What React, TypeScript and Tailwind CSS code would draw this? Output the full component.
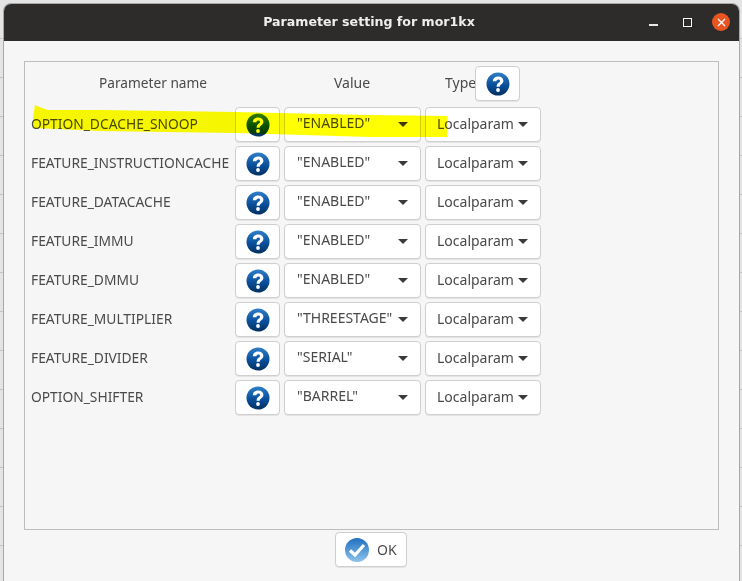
const rows = [
  { name: 'OPTION_DCACHE_SNOOP', value: '"ENABLED"', active: true },
  { name: 'FEATURE_INSTRUCTIONCACHE', value: '"ENABLED"' },
  { name: 'FEATURE_DATACACHE', value: '"ENABLED"' },
  { name: 'FEATURE_IMMU', value: '"ENABLED"' },
  { name: 'FEATURE_DMMU', value: '"ENABLED"' },
  { name: 'FEATURE_MULTIPLIER', value: '"THREESTAGE"' },
  { name: 'FEATURE_DIVIDER', value: '"SERIAL"' },
  { name: 'OPTION_SHIFTER', value: '"BARREL"' },
]

function HelpIcon({ id }: { id: string }) {
  return (
    <svg width="24" height="24" viewBox="0 0 24 24">
      <defs>
        <linearGradient id={id} x1="0" y1="0" x2="0" y2="1">
          <stop offset="0" stopColor="#2f7fc8" />
          <stop offset="0.55" stopColor="#0a4f9c" />
          <stop offset="1" stopColor="#03305f" />
        </linearGradient>
      </defs>
      <circle cx="12" cy="12" r="11.5" fill={`url(#${id})`} />
      <path d="M6.800 9.300C6.900 6.200 9.200 4.500 12.200 4.500c3.100 0 5.200 1.700 5.200 4.300 0 2-1.100 2.900-2.300 3.800-1 .7-1.300 1.200-1.300 2.200h-3.200c0-2 .6-3 1.900-4 .9-.7 1.500-1.100 1.500-1.900 0-.9-.7-1.400-1.700-1.400-1.100 0-1.800.7-1.900 1.800z" fill="#fff" />
      <circle cx="12" cy="18" r="1.900" fill="#fff" />
    </svg>
  )
}

function Caret() {
  return <span className="h-0 w-0 border-x-[5px] border-t-[5px] border-x-transparent border-t-[#3a3a3a]" />
}

function Btn({ className, children }: { className: string; children: React.ReactNode }) {
  return (
    <div className={`flex h-[35px] items-center rounded-[4px] border border-[#cfcfcf] bg-white shadow-[0_1px_0_#e4e4e4] ${className}`}>
      {children}
    </div>
  )
}

export default function App() {
  return (
    <div className="relative h-[581px] w-[742px] overflow-hidden bg-[repeating-linear-gradient(180deg,#e4e4e4_0,#e4e4e4_38px,#c4c4c4_38px,#c4c4c4_39px)] pl-1 pr-[3px] pt-1 font-['Noto_Sans',sans-serif] text-[14px] text-[#4a4a4a]">
      <div className="flex h-[577px] flex-col rounded-t-[7px] bg-[#f6f6f6] shadow-[0_0_0_1px_#a8a8a8]">
        {/* title bar */}
        <div className="relative flex h-[37px] items-center justify-center rounded-t-[7px] bg-[#2e2c2b] pr-[5px]">
          <span className="font-['DejaVu_Sans',sans-serif] text-[12.6px] font-bold text-[#eeeeee]">Parameter setting for mor1kx</span>
          <div className="absolute right-[9px] top-[9px] flex items-center">
            <span className="mr-[25px] mt-[5px] h-[2px] w-[9px] bg-[#e8e8e8]" />
            <span className="mr-[20px] h-[9px] w-[9px] border border-white" />
            <span className="flex h-[18px] w-[18px] items-center justify-center rounded-full bg-[#e95420]">
              <svg width="9" height="9" viewBox="0 0 9 9"><path d="M1 1l7 7M8 1L1 8" stroke="#fff" strokeWidth="1.400" /></svg>
            </span>
          </div>
        </div>

        <div className="flex flex-1 flex-col px-5 pt-5">
          {/* panel */}
          <div className="h-[469px] w-[695px] border border-[#bdbdbd] pl-[6px] pt-1">
            <div className="flex h-[35px] items-center">
              <span className="w-[204px] pl-[68px] text-[13.7px]">Parameter name</span>
              <span className="ml-[49px] w-[111px] pb-[2px] pl-[50px]">Value</span>
              <span className="w-[80px] pb-[2px] pl-[50px]">Type</span>
              <Btn className="w-[45px] justify-center">
                <HelpIcon id="help-head" />
              </Btn>
            </div>
            <div className="mt-[6px] flex flex-col gap-1">
              {rows.map((r, i) => (
                <div key={r.name} className="flex items-center">
                  <span className="w-[204px] whitespace-nowrap text-[13.8px]">{r.name}</span>
                  <Btn className="w-[45px] justify-center">
                    <HelpIcon id={`help-${i}`} />
                  </Btn>
                  <Btn className="ml-1 w-[137px] justify-between pl-3 pr-3">
                    <span className="mt-[-4px] whitespace-nowrap">{r.value}</span>
                    <Caret />
                  </Btn>
                  <Btn className="ml-1 w-[116px] justify-between pl-[11px] pr-3">
                    <span className="mt-[-3px]">Localparam</span>
                    <Caret />
                  </Btn>
                </div>
              ))}
            </div>
          </div>

          {/* ok */}
          <div className="mt-[2px] flex justify-center">
            <Btn className="mr-[1px] w-[72px] gap-2 pl-[9px]">
              <svg width="24" height="24" viewBox="0 0 24 24">
                <defs>
                  <linearGradient id="ok-fill" x1="0" y1="0" x2="0" y2="1">
                    <stop offset="0" stopColor="#1f6fc0" />
                    <stop offset="1" stopColor="#8fc4ea" />
                  </linearGradient>
                </defs>
                <circle cx="12" cy="12" r="12" fill="url(#ok-fill)" />
                <path d="M5 12.500l5 4.500 9-10" fill="none" stroke="#fff" strokeWidth="3.200" />
              </svg>
              <span>OK</span>
            </Btn>
          </div>
        </div>
      </div>

      {/* marker scribble */}
      <svg className="pointer-events-none absolute left-0 top-0 mix-blend-multiply" width="742" height="581">
        <path d="M35 105L42 108L48 110L100 110L235 112L370 115L447 116L447 137L370 137L235 133L100 131L34 128L33 118z" fill="#ffff00" />
      </svg>
    </div>
  )
}
